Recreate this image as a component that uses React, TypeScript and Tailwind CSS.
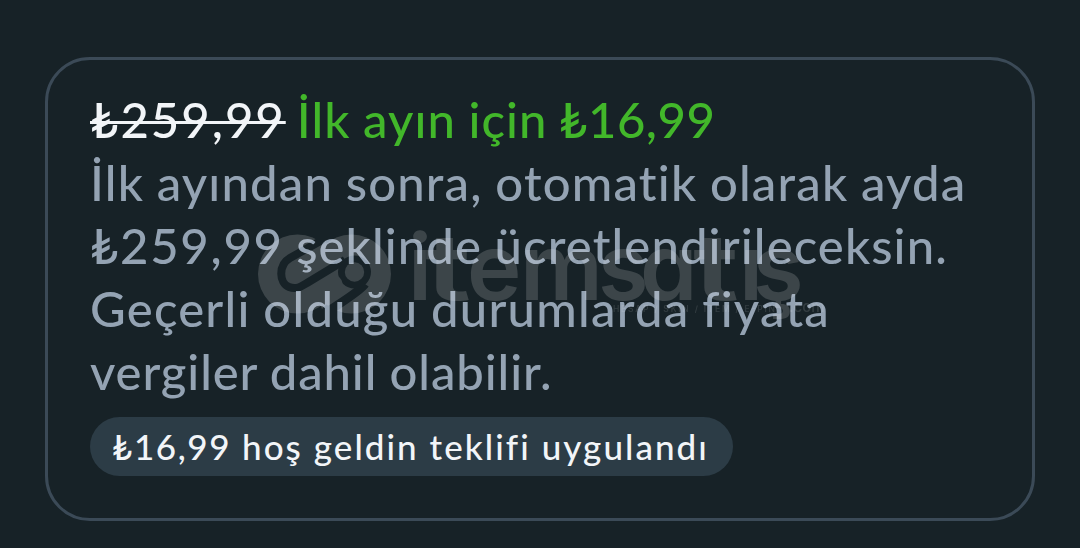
interface Line {
  price?: string;
  text: string;
  className: string;
}

interface Glyph {
  char: string;
  x: number;
  width?: number;
}

const lines: Line[] = [
  { text: 'İlk ayından sonra, otomatik olarak ayda', className: 'tracking-[1.2px]' },
  { price: '₺259,99', text: ' şeklinde ücretlendirileceksin.', className: 'tracking-[1.12px]' },
  { text: 'Geçerli olduğu durumlarda fiyata', className: 'tracking-[1.25px]' },
  { text: 'vergiler dahil olabilir.', className: 'tracking-[0.9px]' },
];

// The "t" is wider in the logo than in the font
const brand: Glyph[] = [
  { char: 'i', x: 408 },
  { char: 't', x: 425, width: 46 },
  { char: 'e', x: 467 },
  { char: 'm', x: 520 },
  { char: 's', x: 598 },
  { char: 'a', x: 640 },
  { char: 't', x: 693, width: 46 },
  { char: 'ı', x: 739 },
  { char: 'ş', x: 753 },
];

function Watermark() {
  return (
    <svg
      className="pointer-events-none absolute top-[190px] left-[250px] font-['Inter',sans-serif] opacity-[0.155]"
      width="620"
      height="160"
      viewBox="250 190 620 160"
      fill="#fff"
    >
      <mask id="link" maskUnits="userSpaceOnUse" x="250" y="225" width="150" height="100">
        <circle cx="297.5" cy="274" r="39.5" fill="#fff" />
        <circle cx="351.5" cy="274" r="39.5" fill="#fff" />
        <path d="M305 263L325 240L345 285L322 309Z" fill="#fff" />
        <path
          d="M324 239L290 258C278 265 279 283 289 287C297 290 302 286 307 283L345 260"
          fill="none"
          stroke="#000"
          strokeWidth="8"
        />
        <path d="M365 284C360 291 345 300 330 310" fill="none" stroke="#000" strokeWidth="9" />
        <circle cx="354.5" cy="272" r="16.5" fill="#000" />
        <path d="M299 303L334 284" stroke="#fff" strokeWidth="17" strokeLinecap="round" />
        <circle cx="354.5" cy="272" r="9.7" fill="#fff" />
      </mask>
      <rect x="250" y="225" width="150" height="100" mask="url(#link)" />
      <g fontSize="92" fontWeight="600" style={{ fontFeatureSettings: '"cv11"' }}>
        {brand.map((glyph) => (
          <text key={glyph.x} x={glyph.x} y="300" textLength={glyph.width} lengthAdjust="spacingAndGlyphs">
            {glyph.char}
          </text>
        ))}
      </g>
      <text x="613" y="312" fontSize="8.5" fontWeight="500" textLength="162" opacity="0.75">
        HESAP / SKIN / ITEM / E-PIN
      </text>
      <text x="789" y="312" fontSize="15" fontWeight="500" opacity="0.75">
        .com
      </text>
    </svg>
  );
}

export default function App() {
  return (
    <main className="relative h-[548px] w-[1080px] overflow-hidden bg-[#172227] pt-[57px] pl-[45px] font-['Lato',sans-serif]">
      <section className="h-[464px] w-[990px] rounded-[45px] border-3 border-[#3b4a57] pt-[28px] pl-[42px]">
        <div className="text-[49px] leading-[63px] font-medium [word-spacing:-1px] whitespace-nowrap text-[#94a3b3]">
          <p className="flex tracking-[1.1px]">
            <span className="tracking-[2px] text-[#f2f5f8] line-through decoration-[3px]">₺259,99</span>
            <span className="ml-[11px] text-[#42b72a]">
              İlk ayın için <span className="-ml-px tracking-[0.5px]">₺16,99</span>
            </span>
          </p>
          {lines.map((line) => (
            <p key={line.text} className={line.className}>
              {line.price && <span className="tracking-[1.7px]">{line.price}</span>}
              {line.text}
            </p>
          ))}
        </div>
        <div className="mt-[14px] flex h-[59px] w-[643px] items-center rounded-full bg-[#2c3c46] pl-[22px] text-[35px] font-medium tracking-[2.05px] whitespace-pre text-[#f2f5f8]">
          <span className="tracking-[1.6px]">₺16,99</span>
          <span> hoş geldin teklifi uygulandı</span>
        </div>
      </section>
      <Watermark />
    </main>
  );
}
